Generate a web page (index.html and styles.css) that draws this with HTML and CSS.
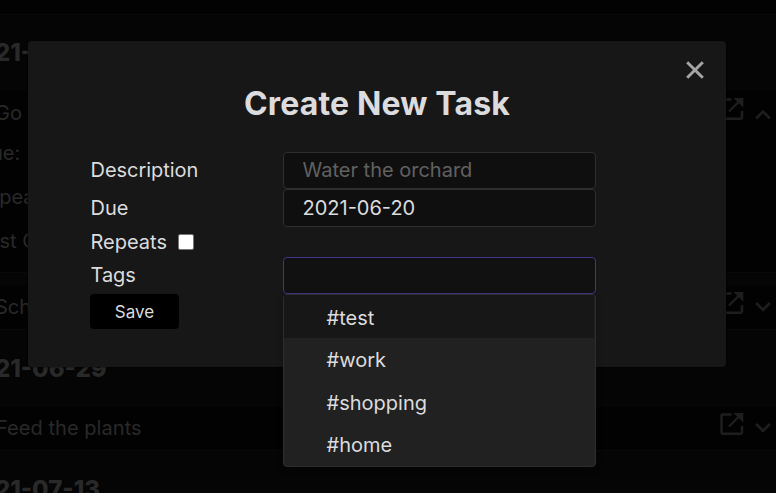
FILE: index.html
```
<!DOCTYPE html>
<html lang="en">
<head>
<meta charset="utf-8">
<title>Tasks</title>
<link rel="stylesheet" href="styles.css">
</head>
<body>
<svg class="defs" aria-hidden="true">
  <symbol id="open" viewBox="0 0 24 24">
    <path d="M11.5 1.5H3Q1.5 1.5 1.5 3V19Q1.5 20.8 3 20.8H20.2Q22 20.8 22 19V13" fill="none" stroke="currentColor" stroke-width="2.5"/>
    <path d="M9 13.5L19 3.5" fill="none" stroke="currentColor" stroke-width="2.4"/>
    <path d="M13.5 0H23.3V9.8Z" fill="currentColor"/>
  </symbol>
  <symbol id="down" viewBox="0 0 14 10">
    <path d="M1 1.5L7 7.5L13 1.5" fill="none" stroke="currentColor" stroke-width="2.4"/>
  </symbol>
  <symbol id="up" viewBox="0 0 14 10">
    <path d="M1 8L7 2L13 8" fill="none" stroke="currentColor" stroke-width="2.4"/>
  </symbol>
</svg>
<main class="page">
  <div class="topbar"></div>
  <h2 class="date">2021-</h2>
  <section class="task expanded">
    <div class="row"><span class="name go">Go</span><svg class="open"><use href="#open"/></svg><svg class="chevron"><use href="#up"/></svg></div>
    <p class="detail due">Due:</p>
    <p class="detail repeats">Repea</p>
    <p class="detail last">Last C</p>
  </section>
  <div class="gap"></div>
  <section class="task compact">
    <div class="row"><span class="name">Sch</span><svg class="open"><use href="#open"/></svg><svg class="chevron"><use href="#down"/></svg></div>
  </section>
  <h2 class="date">2021-06-29</h2>
  <section class="task compact">
    <div class="row"><span class="name plants">Feed the plants</span><svg class="open"><use href="#open"/></svg><svg class="chevron"><use href="#down"/></svg></div>
  </section>
  <h2 class="date">2021-07-13</h2>
</main>
<div class="modal">
  <button class="close" aria-label="Close"><svg class="cross" viewBox="0 0 18 18"><path d="M1.2 1.2L16.8 16.8M16.8 1.2L1.2 16.8"/></svg></button>
  <h1 class="title">Create New Task</h1>
  <form class="form">
    <label class="field"><span class="label">Description</span><input class="input" type="text" placeholder="Water the orchard"></label>
    <label class="field"><span class="label date-label">Due</span><input class="input date-input" type="text" value="2021-06-20"></label>
    <label class="check"><span>Repeats</span><span class="box"></span></label>
    <div class="field tags">
      <span class="label">Tags</span>
      <div class="combo">
        <input class="input active" type="text" aria-label="Tags">
        <ul class="menu">
          <li class="option selected">#test</li>
          <li class="option">#work</li>
          <li class="option">#shopping</li>
          <li class="option">#home</li>
        </ul>
      </div>
    </div>
    <button class="save" type="button">Save</button>
  </form>
</div>
</body>
</html>
```
FILE: styles.css
```
* { box-sizing: border-box; }
body {
  margin: 0;
  height: 493px;
  overflow: hidden;
  background: #050505;
  color: #dcdcde;
  font: 20px/24px Inter, "Liberation Sans", sans-serif;
}
.defs { display: none; }
.page { height: 493px; overflow: hidden; color: #292929; }
.topbar { height: 15px; background: #020202; border-bottom: 1px solid #090909; }
.date {
  height: 77px;
  margin: 0 0 0 -37px;
  padding-top: 25px;
  font-size: 24px;
  line-height: 28px;
  font-weight: 800;
}
.topbar + .date { height: 76px; padding-top: 24px; }
.task { background: #020202; border-bottom: 1px solid #090909; }
.expanded { height: 182px; }
.compact { height: 44px; }
.gap { height: 13px; }
.row { display: flex; align-items: flex-start; height: 42px; padding: 6px 5.5px 0 0; }
.name { flex: 1; margin: 3px 0 0 -5px; }
.plants { margin-left: -4px; letter-spacing: .05px; }
.go { margin-top: 4px; }
.open { width: 24px; height: 24px; margin-right: 10.5px; color: #1e1e1e; }
.expanded .open { margin-top: 1px; }
.chevron { width: 16px; height: 12px; margin-top: 9px; color: #1e1e1e; }
.expanded .chevron { margin-top: 12px; }
.detail { margin: 0 0 20px; white-space: nowrap; }
.due { margin-top: 8px; margin-left: -23.5px; }
.repeats { margin-left: -25px; }
.last { margin-left: -23px; }
.modal {
  position: absolute;
  left: 28px;
  top: 41px;
  width: 698px;
  height: 325.5px;
  padding: 43px 62px 0;
  background: #171717;
  border-radius: 4px;
  box-shadow: 0 0 2px #000;
}
.close {
  position: absolute;
  top: 18.5px;
  right: 21.5px;
  width: 20px;
  height: 20px;
  padding: 1px;
  border: 0;
  background: none;
  color: #a6a6a6;
}
.cross { display: block; width: 18px; height: 18px; fill: none; stroke: currentColor; stroke-width: 2.9; }
.title { margin: 0; height: 67.6px; text-align: center; font-size: 32px; line-height: 40px; font-weight: 700; letter-spacing: .16px; }
.form { display: flex; flex-direction: column; width: 506px; }
.field { display: grid; grid-template-columns: 193px 313px; align-items: center; height: 37.5px; }
.label { padding: 0 0 1px .5px; letter-spacing: -.03px; }
.date-label { padding-bottom: 0; }
.input {
  display: block;
  width: 313px;
  height: 37.5px;
  padding: 0 18.5px 1px;
  border: 1px solid #2e2e2e;
  border-radius: 4px;
  outline: 0;
  background: #0f0f0f;
  color: #dcdcde;
  font: inherit;
}
.date-input { padding-bottom: 0; }
.input::placeholder { color: #616161; opacity: 1; }
.check { display: flex; align-items: center; gap: 11px; height: 30px; padding-left: .5px; }
.box { width: 16px; height: 16px; border: 1px solid #767676; border-radius: 2px; background: #fff; }
.combo { position: relative; }
.active { border-color: #44348a; background: #111; }
.menu {
  position: absolute;
  top: 37.9px;
  left: 0;
  width: 313px;
  height: 173px;
  margin: 0;
  padding: 0;
  border: 1px solid #2e2e2e;
  border-radius: 4px;
  background: #212121;
  box-shadow: 0 2px 6px rgba(0, 0, 0, .3);
  list-style: none;
}
.option { height: 42.5px; padding: 10.5px 42.5px 0; }
.selected { height: 43px; padding-top: 11px; margin: 0 1px -.5px 0; background: #171717; }
.save {
  width: 89px;
  height: 35px;
  padding: 0;
  border: 0;
  border-radius: 4px;
  background: #000;
  color: #dcdcde;
  font: 17px/20px Inter, "Liberation Sans", sans-serif;
}
```
